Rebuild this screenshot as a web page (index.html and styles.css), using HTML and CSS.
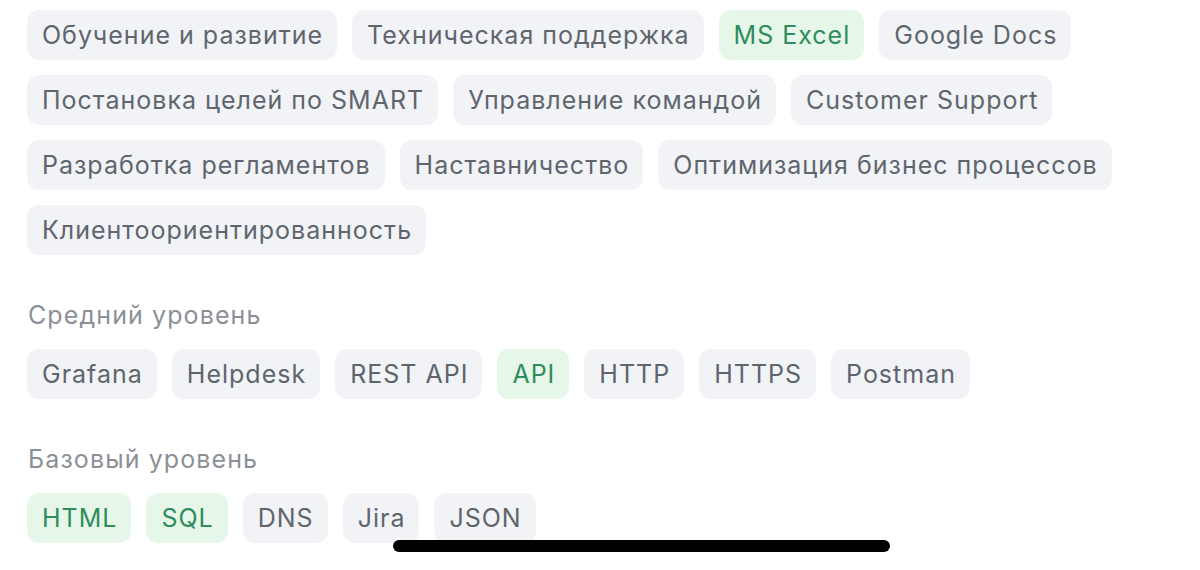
FILE: index.html
```html
<!DOCTYPE html>
<html lang="ru">
<head>
<meta charset="utf-8">
<link rel="stylesheet" href="styles.css">
</head>
<body>
<div class="page">
  <div class="tags">
    <span class="tag">Обучение и развитие</span>
    <span class="tag">Техническая поддержка</span>
    <span class="tag green">MS Excel</span>
    <span class="tag">Google Docs</span>
    <span class="tag">Постановка целей по SMART</span>
    <span class="tag">Управление командой</span>
    <span class="tag">Customer Support</span>
    <span class="tag">Разработка регламентов</span>
    <span class="tag">Наставничество</span>
    <span class="tag">Оптимизация бизнес процессов</span>
    <span class="tag">Клиентоориентированность</span>
  </div>
  <div class="level">Средний уровень</div>
  <div class="tags">
    <span class="tag">Grafana</span>
    <span class="tag">Helpdesk</span>
    <span class="tag">REST API</span>
    <span class="tag green">API</span>
    <span class="tag">HTTP</span>
    <span class="tag">HTTPS</span>
    <span class="tag">Postman</span>
  </div>
  <div class="level">Базовый уровень</div>
  <div class="tags">
    <span class="tag green">HTML</span>
    <span class="tag green">SQL</span>
    <span class="tag">DNS</span>
    <span class="tag">Jira</span>
    <span class="tag">JSON</span>
  </div>
</div>
<div class="home-indicator"></div>
</body>
</html>
```
FILE: styles.css
```css
html, body {
  margin: 0;
  padding: 0;
  background: #ffffff;
}
body {
  width: 1200px;
  height: 570px;
  overflow: hidden;
  position: relative;
  font-family: Inter, "Noto Sans", sans-serif;
}
.page {
  padding: 10px 0 0 27px;
  width: 1150px;
}
.tags {
  display: flex;
  flex-wrap: wrap;
  gap: 15px 15px;
}
.tag {
  display: inline-flex;
  align-items: center;
  height: 50px;
  padding: 0 14px 0 15px;
  border-radius: 12px;
  background: #f1f3f7;
  color: #60656d;
  font-size: 25px;
  letter-spacing: 1px;
  box-sizing: border-box;
}
.tag.green {
  background: #e6f7ea;
  color: #2f8c5c;
}
.level {
  margin: 45px 0 19px 1px;
  height: 30px;
  line-height: 30px;
  font-size: 25px;
  letter-spacing: 1.1px;
  color: #8b9097;
}
.home-indicator {
  position: absolute;
  left: 393px;
  top: 540px;
  width: 497px;
  height: 12px;
  border-radius: 6px;
  background: #000;
}
```
